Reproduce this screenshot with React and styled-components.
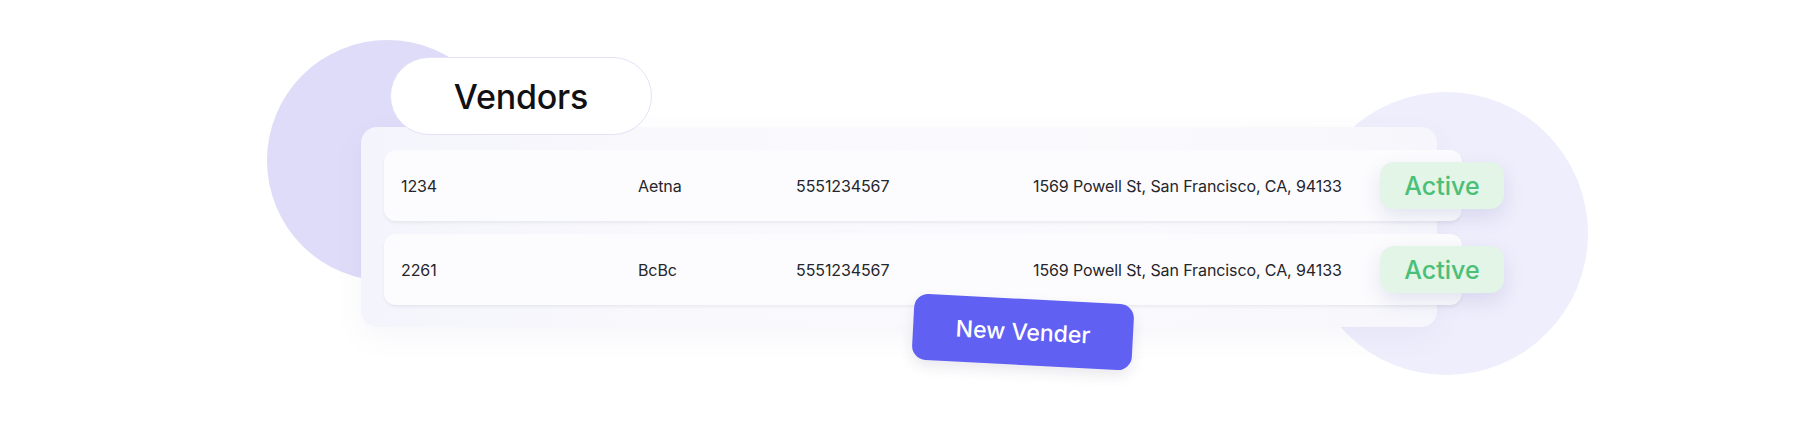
import React from "react";
import styled, { createGlobalStyle } from "styled-components";

const GlobalStyle = createGlobalStyle`
  html, body {
    margin: 0;
    padding: 0;
    background: #ffffff;
  }
  body {
    font-family: "Inter", "Noto Sans", sans-serif;
    color: #1f1f24;
  }
`;

const Stage = styled.div`
  position: relative;
  width: 1800px;
  height: 443px;
  overflow: hidden;
  padding: 57px 0 0 361px;
  box-sizing: border-box;
`;

const Blob = styled.div`
  position: absolute;
  border-radius: 50%;
  left: ${(p) => p.x}px;
  top: ${(p) => p.y}px;
  width: ${(p) => p.size}px;
  height: ${(p) => p.size}px;
  background: ${(p) => p.color};
  z-index: 0;
`;

const Content = styled.div`
  position: relative;
  z-index: 1;
  display: flex;
  flex-direction: column;
  align-items: flex-start;
`;

const TitlePill = styled.div`
  position: relative;
  z-index: 2;
  margin-left: 29px;
  width: 262px;
  height: 78px;
  box-sizing: border-box;
  border-radius: 39px;
  border: 1px solid #e3e2f7;
  background: #ffffff;
  display: flex;
  align-items: center;
  justify-content: center;
  font-size: 34px;
  font-weight: 500;
  color: #111114;
  letter-spacing: -0.2px;
`;

const Panel = styled.div`
  position: relative;
  z-index: 1;
  margin-top: -8px;
  width: 1076px;
  height: 200px;
  box-sizing: border-box;
  padding: 23px 0 0 23px;
  border-radius: 16px;
  background: linear-gradient(90deg, #f4f4fc 0%, #f9f9fd 35%, #fafafd 70%, #f6f6fc 100%);
  box-shadow: 0 10px 30px rgba(110, 110, 170, 0.06);
  display: flex;
  flex-direction: column;
  gap: 13px;
`;

const Row = styled.div`
  width: 1078px;
  height: 71px;
  box-sizing: border-box;
  padding-left: 17px;
  border-radius: 12px;
  background: #fcfcfe;
  box-shadow: 0 2px 3px rgba(60, 60, 90, 0.07);
  display: grid;
  grid-template-columns: 237px 158px 237px 347px 124px;
  align-items: center;
  font-size: 16px;
  letter-spacing: -0.1px;
  color: #25252b;
`;

const Cell = styled.div`
  white-space: nowrap;
`;

const Badge = styled.div`
  justify-self: start;
  width: 124px;
  height: 47px;
  border-radius: 14px;
  background: #e2f5e7;
  color: #4bbf78;
  font-size: 25px;
  font-weight: 500;
  letter-spacing: 0;
  display: flex;
  align-items: center;
  justify-content: center;
  box-shadow: 0 8px 20px rgba(100, 100, 170, 0.16);
`;

const NewButton = styled.button`
  position: relative;
  z-index: 3;
  margin: -28px 0 0 552px;
  width: 220px;
  height: 66px;
  border: none;
  border-radius: 14px;
  background: #6060f3;
  color: #ffffff;
  font-family: "Inter", "Noto Sans", sans-serif;
  font-size: 23px;
  font-weight: 500;
  transform: rotate(3deg);
  box-shadow: 0 6px 14px rgba(40, 40, 90, 0.1);
  cursor: pointer;
`;

const vendors = [
  { id: "1234", name: "Aetna", phone: "5551234567", address: "1569 Powell St, San Francisco, CA, 94133", status: "Active" },
  { id: "2261", name: "BcBc", phone: "5551234567", address: "1569 Powell St, San Francisco, CA, 94133", status: "Active" },
];

const App = () => {
  return (
    <>
      <GlobalStyle />
      <Stage>
        <Blob x={267} y={40} size={241} color="#dedcf8" />
        <Blob x={1305} y={92} size={283} color="#efeefc" />
        <Content>
          <TitlePill>Vendors</TitlePill>
          <Panel>
            {vendors.map((v) => (
              <Row key={v.id}>
                <Cell>{v.id}</Cell>
                <Cell>{v.name}</Cell>
                <Cell>{v.phone}</Cell>
                <Cell>{v.address}</Cell>
                <Badge>{v.status}</Badge>
              </Row>
            ))}
          </Panel>
          <NewButton>New Vender</NewButton>
        </Content>
      </Stage>
    </>
  );
};

export default App;
